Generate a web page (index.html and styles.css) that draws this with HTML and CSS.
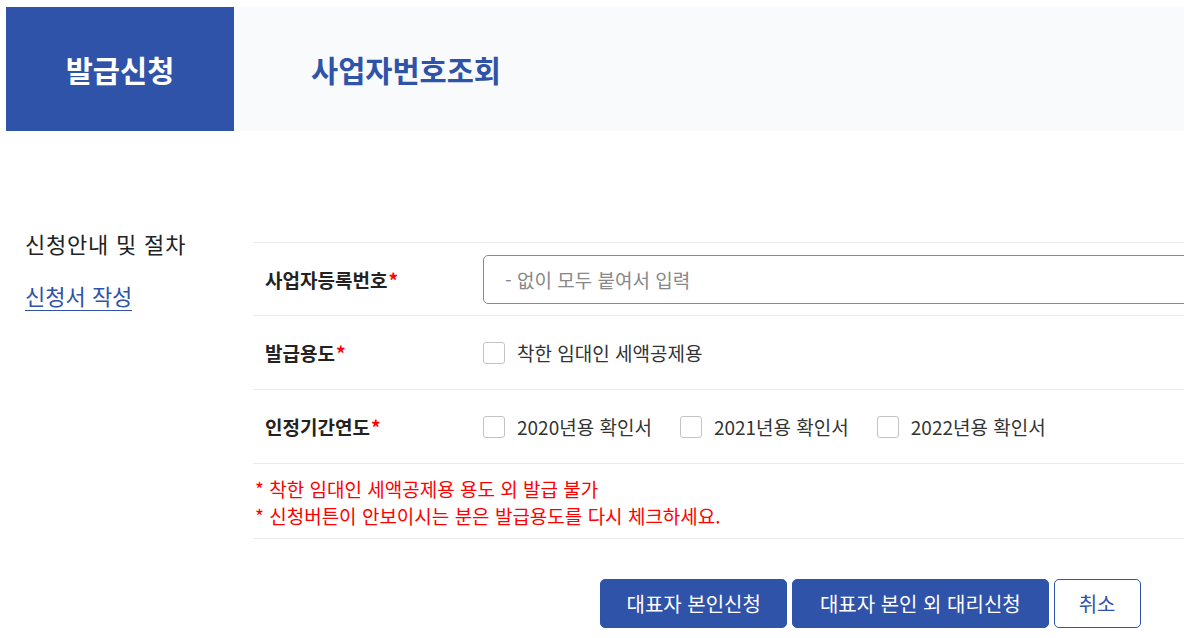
FILE: index.html
```html
<!DOCTYPE html>
<html lang="ko">
<head>
<meta charset="utf-8">
<link rel="stylesheet" href="styles.css">
</head>
<body>
<div class="page">
  <header class="topbar">
    <div class="tab-active">발급신청</div>
    <div class="tab-title">사업자번호조회</div>
  </header>
  <div class="main">
    <nav class="side">
      <div class="side-item">신청안내 및 절차</div>
      <div class="side-item current">신청서 작성</div>
    </nav>
    <section class="form">
      <div class="row first">
        <div class="label">사업자등록번호<span class="req">*</span></div>
        <div class="field"><input class="text-input" type="text" placeholder="- 없이 모두 붙여서 입력"></div>
      </div>
      <div class="row">
        <div class="label">발급용도<span class="req">*</span></div>
        <div class="field">
          <label class="check"><span class="box"></span>착한 임대인 세액공제용</label>
        </div>
      </div>
      <div class="row">
        <div class="label">인정기간연도<span class="req">*</span></div>
        <div class="field">
          <label class="check"><span class="box"></span>2020년용 확인서</label>
          <label class="check"><span class="box"></span>2021년용 확인서</label>
          <label class="check"><span class="box"></span>2022년용 확인서</label>
        </div>
      </div>
      <div class="notes">
        <p>* 착한 임대인 세액공제용 용도 외 발급 불가</p>
        <p>* 신청버튼이 안보이시는 분은 발급용도를 다시 체크하세요.</p>
      </div>
      <div class="buttons">
        <button class="btn primary">대표자 본인신청</button>
        <button class="btn primary wide">대표자 본인 외 대리신청</button>
        <button class="btn outline">취소</button>
      </div>
    </section>
  </div>
</div>
</body>
</html>
```

FILE: styles.css
```css
html, body {
  margin: 0;
  padding: 0;
  background: #fff;
  overflow: hidden;
}
body {
  font-family: "Noto Sans CJK KR", "Noto Sans", sans-serif;
  color: #222;
}
.page {
  padding: 7px 0 0 6px;
  width: 1500px;
}
.topbar {
  display: flex;
  height: 124px;
  background: #f9fafc;
}
.tab-active {
  width: 228px;
  background: #2f53a8;
  color: #fff;
  font-size: 29.5px;
  font-weight: 700;
  display: flex;
  align-items: center;
  justify-content: center;
}
.tab-title {
  padding-left: 77px;
  color: #2f53a8;
  font-size: 29.5px;
  font-weight: 700;
  display: flex;
  align-items: center;
}
.main {
  display: flex;
  margin-top: 97px;
}
.side {
  width: 228px;
  padding-left: 19px;
  flex-shrink: 0;
}
.side-item {
  font-size: 22px;
  letter-spacing: 0.8px;
  line-height: 30px;
  color: #222;
  margin-bottom: 22px;
}
.side-item.current {
  color: #2f53a8;
  display: inline-block;
  border-bottom: 1px solid #2f53a8;
  letter-spacing: 0;
  line-height: 30px;
}
.form {
  margin-top: 14px;
  width: 1233px;
  border-top: 1px solid #ebebeb;
}
.row {
  display: flex;
  align-items: center;
  height: 73px;
  border-bottom: 1px solid #ebebeb;
}
.row.first {
  height: 72px;
}
.label {
  width: 218px;
  padding-left: 12px;
  font-size: 19px;
  font-weight: 700;
  color: #222;
}
.req {
  color: #f00;
  margin-left: 1px;
}
.field {
  display: flex;
  align-items: center;
  flex: 1;
}
.text-input {
  width: 760px;
  height: 49px;
  box-sizing: border-box;
  border: 1px solid #8a8a8a;
  border-radius: 5px;
  padding: 0 21px;
  font-family: inherit;
  font-size: 19px;
  color: #222;
  outline: none;
}
.text-input::placeholder {
  color: #888;
}
.check {
  display: flex;
  align-items: center;
  font-size: 19px;
  color: #333;
  margin-right: 28px;
}
.box {
  width: 20px;
  height: 20px;
  border: 1px solid #c4c4c4;
  border-radius: 3px;
  margin-right: 12px;
  background: #fff;
}
.notes {
  border-bottom: 1px solid #ebebeb;
  padding: 11px 2px 9px;
}
.notes p {
  margin: 0;
  color: #f00;
  font-size: 19px;
  line-height: 27px;
}
.buttons {
  display: flex;
  justify-content: center;
  gap: 5px;
  margin-top: 40px;
  padding-left: 2px;
}
.btn {
  height: 49px;
  border-radius: 5px;
  font-family: inherit;
  font-size: 20px;
  padding: 0 25px;
  cursor: pointer;
}
.btn.wide {
  padding: 0 27px;
}
.btn.primary {
  background: #2f53a8;
  color: #fff;
  border: 1px solid #2f53a8;
}
.btn.outline {
  background: #fff;
  color: #2f53a8;
  border: 1px solid #2f53a8;
  padding: 0 24px;
}
```
